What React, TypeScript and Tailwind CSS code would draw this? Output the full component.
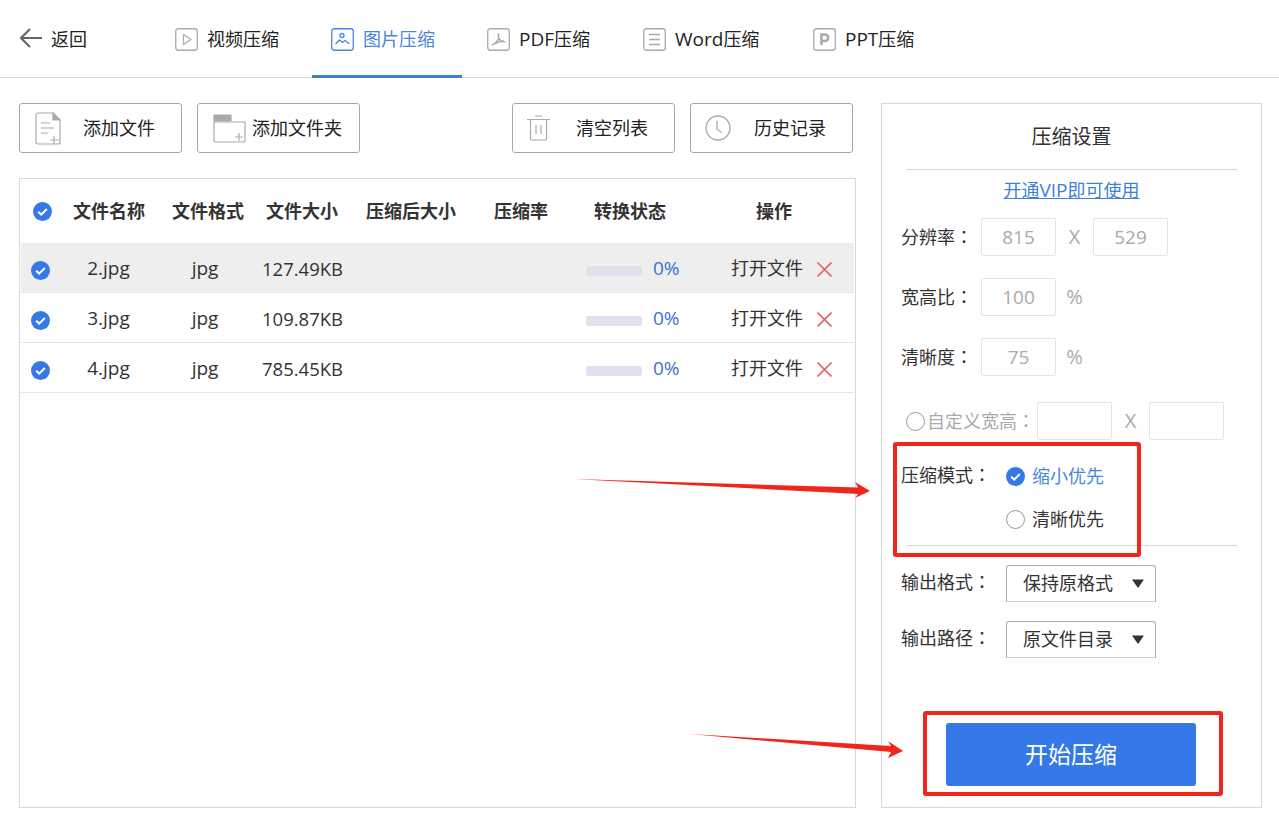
import React from 'react'

const rowGrid = 'grid grid-cols-[43px_90px_108px_80px_138px_82px_136px_152px] items-center'

function CheckIcon() {
  return (
    <svg width="19" height="19" viewBox="0 0 19 19" className="shrink-0">
      <circle cx="9.5" cy="9.5" r="9.5" fill="#3579e8" />
      <path d="M5.2 9.8l3 2.8 5.6-5.6" fill="none" stroke="#fff" strokeWidth="2" />
    </svg>
  )
}

function TabIcon({ color, children }: { color: string; children: React.ReactNode }) {
  return (
    <svg width="23" height="23" viewBox="0 0 23 23" className="shrink-0" fill="none" stroke={color}>
      <rect x="0.75" y="0.75" width="21.5" height="21.5" rx="2.5" strokeWidth="1.3" />
      {children}
    </svg>
  )
}

const tabs = [
  {
    latin: '',
    label: '视频压缩',
    width: 'w-[150px]',
    icon: <path d="M8.5 6.500l7.500 5-7.500 5z" stroke="#aaa" strokeWidth="1.2" strokeLinejoin="round" />,
  },
  {
    latin: '',
    label: '图片压缩',
    width: 'w-[150px]',
    active: true,
    icon: (
      <>
        <circle cx="11" cy="7.500" r="2" strokeWidth="1.3" />
        <path d="M4.500 16l4-4 3 2.500 2.500-2 4.500 3.500" strokeWidth="1.3" />
      </>
    ),
  },
  {
    latin: 'PDF',
    label: '压缩',
    width: 'w-[150px]',
    icon: (
      <path
        d="M11.500 5c-.5 3 .5 6 2 7.500 1 1 3 1.500 5 1.500M11.500 10.500c-1 2.500-3 5-6.500 6.500M8 15.500c3-1.500 6-2.500 9-2.500"
        stroke="#aaa"
        strokeWidth="1.500"
      />
    ),
  },
  {
    latin: 'Word',
    label: '压缩',
    width: 'w-[164px]',
    icon: <path d="M6 6.500h11M6 11.500h11M6 16.500h11" stroke="#aaa" strokeWidth="1.300" />,
  },
  {
    latin: 'PPT',
    label: '压缩',
    width: 'w-[150px]',
    icon: <path d="M8.500 17V6.500h3.500a3.200 3.200 0 0 1 0 6.500H8.500" stroke="#aaa" strokeWidth="2.600" />,
  },
]

const files = [
  { name: '2.jpg', size: '127.49KB', selected: true },
  { name: '3.jpg', size: '109.87KB' },
  { name: '4.jpg', size: '785.45KB' },
]

function ToolButton({ icon, label, labelClass }: { icon: React.ReactNode; label: string; labelClass: string }) {
  return (
    <div className="relative flex h-[50px] w-[163px] items-center rounded-[3px] border border-[#a8a8a8] text-[18px] text-[#222]">
      {icon}
      <span className={labelClass}>{label}</span>
    </div>
  )
}

// the colon sits centred in its cell in the reference, the TC face draws it that way
function Colon() {
  return <span className="font-['Noto_Sans_CJK_TC']">：</span>
}

function Field({ value, className = 'w-[75px]' }: { value?: string; className?: string }) {
  return (
    <div className={`flex h-[38px] items-center justify-center rounded-[2px] border border-[#e4e4e4] text-[19px] text-[#aaa] ${className}`}>
      {value}
    </div>
  )
}

function Unit({ children }: { children: React.ReactNode }) {
  return <div className="w-[37px] text-center text-[20px] text-[#aaa]">{children}</div>
}

function Dropdown({ label, value, className }: { label: string; value: string; className: string }) {
  return (
    <div className={`flex items-center pl-[19px] ${className}`}>
      <div className="w-[105px] -translate-y-[2px] text-[18px] text-[#333]">
        {label}
        <Colon />
      </div>
      <div className="flex h-[37px] w-[150px] items-center justify-between rounded-t-[3px] border border-[#aaa] border-b-[#ccc] pl-[16px] pr-[11px] text-[18px] text-[#333]">
        <span>{value}</span>
        <svg width="12" height="9" viewBox="0 0 12 9">
          <path d="M0 0.500h12L6 9z" fill="#333" />
        </svg>
      </div>
    </div>
  )
}

export default function App() {
  return (
    <div
      className="relative h-[825px] w-[1279px] overflow-hidden bg-white text-[#333]"
      style={{ fontFamily: '"Open Sans", "Noto Sans CJK SC", sans-serif' }}
    >
      <header className="flex h-[78px] border-b border-[#d6d6d6]">
        <div className="flex w-[156px] items-center pl-[19px] pb-[1px] text-[18px]">
          <svg width="24" height="20" viewBox="0 0 24 20" fill="none" stroke="#666" strokeWidth="2.200">
            <path d="M23 10H2M11 1L2 10l9 9" />
          </svg>
          <span className="ml-[8px] mt-[2px] text-[#222]">返回</span>
        </div>
        <nav className="flex gap-[6px]">
          {tabs.map(tab => (
            <div
              key={tab.label + tab.latin}
              className={`-mb-px flex h-[78px] items-center border-b-[3px] pl-[19px] pt-[4px] ${tab.width} ${
                tab.active ? 'border-[#3f7fdc] text-[#4a86d8]' : 'border-transparent text-[#222]'
              }`}
            >
              <TabIcon color={tab.active ? '#4a86d8' : '#aaa'}>{tab.icon}</TabIcon>
              <span className="ml-[9px] text-[18px]">
                {tab.latin && <span className="text-[19px]">{tab.latin}</span>}
                {tab.label}
              </span>
            </div>
          ))}
        </nav>
      </header>

      <div className="flex gap-[25px] pl-[19px] pt-[25px]">
        <section className="w-[837px]">
          <div className="flex w-[834px] justify-between">
            <div className="flex gap-[15px]">
              <ToolButton
                label="添加文件"
                labelClass="ml-[22px]"
                icon={
                  <svg width="26" height="33" viewBox="0 0 26 33" fill="none" stroke="#aaa" strokeWidth="1.200" className="ml-[15px]">
                    <path d="M1 3a2 2 0 0 1 2-2h15l7 7v22a2 2 0 0 1-2 2H3a2 2 0 0 1-2-2z" />
                    <path d="M18 1v7h7z" fill="#aaa" />
                    <path d="M6 11h9M6 16h13M6 21h7M19 24v8M15 28h9" />
                  </svg>
                }
              />
              <ToolButton
                label="添加文件夹"
                labelClass="ml-[6px]"
                icon={
                  <svg width="33" height="29" viewBox="0 0 33 29" fill="none" stroke="#aaa" strokeWidth="1.200" className="ml-[15px]">
                    <path d="M1 8h31v18a2 2 0 0 1-2 2H3a2 2 0 0 1-2-2z" />
                    <path d="M1 1h17v6H1z" fill="#aaa" />
                    <path d="M26 19v8M22 23h8" />
                  </svg>
                }
              />
            </div>
            <div className="flex gap-[15px]">
              <ToolButton
                label="清空列表"
                labelClass="ml-[26px]"
                icon={
                  <svg width="23" height="26" viewBox="0 0 23 26" fill="none" stroke="#aaa" strokeWidth="1.200" className="ml-[14px]">
                    <path d="M8 1h7M0 4.500h23M3.500 4.500V24a1 1 0 0 0 1 1h14a1 1 0 0 0 1-1V4.500M9 10v9M14 10v9" />
                  </svg>
                }
              />
              <ToolButton
                label="历史记录"
                labelClass="ml-[23px]"
                icon={
                  <svg width="26" height="26" viewBox="0 0 26 26" fill="none" stroke="#aaa" strokeWidth="1.300" className="ml-[14px]">
                    <circle cx="13" cy="13" r="12" />
                    <path d="M12 6v8.500l5 3" />
                  </svg>
                }
              />
            </div>
          </div>

          <div className="mt-[25px] flex h-[630px] flex-col border border-[#d8d8d8] px-px">
            <div className={`${rowGrid} h-[64px] pt-px text-center text-[18px] font-bold text-[#333]`}>
              <div className="flex justify-center">
                <CheckIcon />
              </div>
              <div>文件名称</div>
              <div>文件格式</div>
              <div>文件大小</div>
              <div>压缩后大小</div>
              <div>压缩率</div>
              <div>转换状态</div>
              <div>操作</div>
            </div>
            {files.map(file => (
              <div
                key={file.name}
                className={`${rowGrid} h-[50px] border-b border-[#e5e5e5] pt-[2px] text-center text-[18px] text-[#333] ${
                  file.selected ? 'bg-[#eeeeee]' : ''
                }`}
              >
                <div className="flex justify-center pr-[4px] pt-[3px]">
                  <CheckIcon />
                </div>
                <div className="pr-[1px] text-[19px]">{file.name}</div>
                <div className="pr-[6px] text-[19px]">jpg</div>
                <div className="pr-[2px] text-[18.500px]">{file.size}</div>
                <div />
                <div />
                <div className="flex items-center pl-[24px]">
                  <div className="mt-[5px] h-[10px] w-[56px] rounded-[3px] bg-[#e0e0ee]" />
                  <span className="ml-[11px] text-[19px] text-[#3a72d0]">0%</span>
                </div>
                <div className="flex items-center pl-[33px]">
                  <span>打开文件</span>
                  <svg width="15" height="15" viewBox="0 0 15 15" fill="none" stroke="#e46a6a" strokeWidth="1.700" className="ml-[14px] mt-[2px]">
                    <path d="M0.500 0.500l14 14M14.500 0.500l-14 14" />
                  </svg>
                </div>
              </div>
            ))}
          </div>
        </section>

        <aside className="h-[705px] w-[381px] border border-[#d8d8d8]">
          <div className="mx-[24px] flex h-[66px] items-center justify-center border-b border-[#d6d6d6] text-[20px] text-[#333]">
            压缩设置
          </div>
          <div className="flex h-[40px] items-center justify-center text-[18px] text-[#3f7fdc] underline">
            开通<span className="text-[19px]">VIP</span>即可使用
          </div>

          <div className="mt-[8px] flex items-center pl-[19px]">
            <div className="w-[80px] text-[18px]">
              分辨率
              <Colon />
            </div>
            <Field value="815" />
            <Unit>X</Unit>
            <Field value="529" />
          </div>
          <div className="mt-[22px] flex items-center pl-[19px]">
            <div className="w-[80px] text-[18px]">
              宽高比
              <Colon />
            </div>
            <Field value="100" />
            <Unit>%</Unit>
          </div>
          <div className="mt-[22px] flex items-center pl-[19px]">
            <div className="w-[80px] text-[18px]">
              清晰度
              <Colon />
            </div>
            <Field value="75" />
            <Unit>%</Unit>
          </div>

          <div className="mt-[26px] flex items-center pl-[24px]">
            <div className="mt-px h-[19px] w-[19px] rounded-full border-[1.500px] border-[#999]" />
            <div className="ml-[2px] w-[110px] text-[18px] text-[#aaa]">
              自定义宽高
              <Colon />
            </div>
            <Field />
            <Unit>X</Unit>
            <Field />
          </div>

          <div className="mt-[15px] flex pl-[19px]">
            <div className="w-[105px] pt-[6px] text-[18px]">
              压缩模式
              <Colon />
            </div>
            <div>
              <div className="flex h-[43px] items-center">
                <CheckIcon />
                <span className="ml-[7px] text-[18px] text-[#4a86d8]">缩小优先</span>
              </div>
              <div className="flex h-[43px] items-center">
                <div className="h-[19px] w-[19px] rounded-full border-[1.500px] border-[#999]" />
                <span className="ml-[7px] text-[18px]">清晰优先</span>
              </div>
            </div>
          </div>
          <div className="mx-[24px] mt-[4px] border-b border-[#d6d6d6]" />

          <Dropdown label="输出格式" value="保持原格式" className="mt-[19px]" />
          <Dropdown label="输出路径" value="原文件目录" className="mt-[19px]" />

          <div className="ml-[64px] mt-[65px] flex h-[63px] w-[250px] items-center justify-center rounded-[3px] bg-[#3579e8] text-[23px] text-white">
            开始压缩
          </div>
        </aside>
      </div>

      {/* annotation overlay */}
      <div className="absolute left-[893px] top-[442px] h-[115px] w-[248px] rounded-[3px] border-[4px] border-[#f0261c]" />
      <div className="absolute left-[923px] top-[711px] h-[85px] w-[300px] rounded-[3px] border-[4px] border-[#f0261c]" />
      <svg className="absolute left-0 top-0" width="1279" height="825" viewBox="0 0 1279 825" fill="#f0261c">
        <path d="M573 479L858 487.500 855 482 870 491 855 498 858 494z" />
        <path d="M690 734L891 746 888 741 903 751 888 758 891 752z" />
      </svg>
    </div>
  )
}
